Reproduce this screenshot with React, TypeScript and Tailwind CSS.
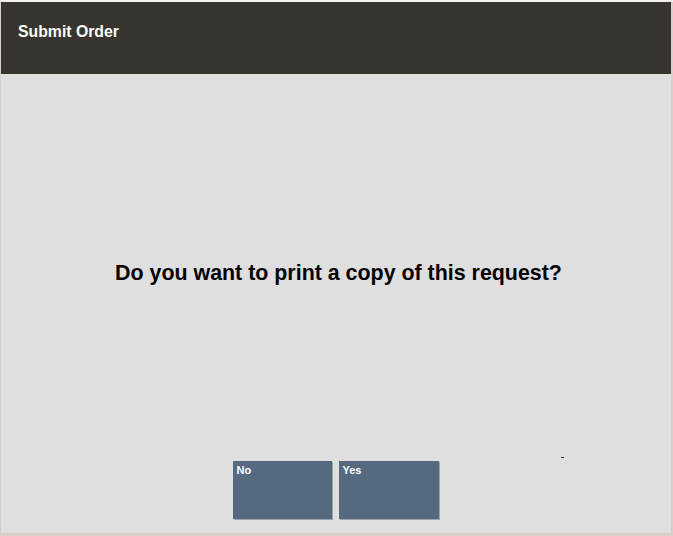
import React from "react";

export default function App() {
  return (
    <div className="w-[673px] h-[536px] bg-[#d8cfc8] flex flex-col pl-px pr-[2px] pb-[3px] border-t-2 border-[#f2f2f2]" style={{ fontFamily: '"Liberation Sans", Arial, sans-serif' }}>
      <div className="h-[72px] bg-[#38342f] flex items-start pt-[20px] pl-[17px]">
        <span className="text-white font-bold text-[15.8px] leading-[19px]">Submit Order</span>
      </div>
      <div className="flex-1 bg-[#dfdfdf] relative flex flex-col items-center">
        <div className="mt-[186px] ml-[5px] text-black font-bold text-[21.4px] leading-[26px]">Do you want to print a copy of this request?</div>
        <div className="absolute left-[560px] top-[383px] w-[3px] h-px bg-[#333]" />
        <div className="mt-[175px] flex gap-[7px] ml-[-1px]">
          <button className="w-[99px] h-[58px] bg-[#556a7e] text-white text-[11px] font-bold text-left flex items-start pl-[4px] pt-[1px] shadow-[1px_1px_0_#9aa3ac]">No</button>
          <button className="w-[100px] h-[58px] bg-[#556a7e] text-white text-[11px] font-bold text-left flex items-start pl-[4px] pt-[1px] shadow-[1px_1px_0_#9aa3ac]">Yes</button>
        </div>
      </div>
    </div>
  );
}
